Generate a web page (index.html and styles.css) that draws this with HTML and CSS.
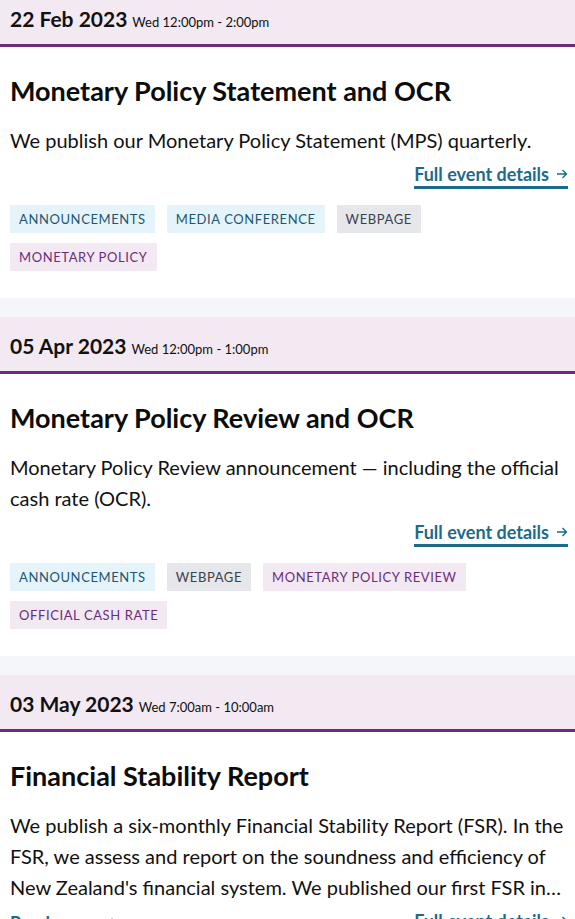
FILE: index.html
```html
<!DOCTYPE html>
<html lang="en">
<head>
<meta charset="utf-8">
<title>Events</title>
<link rel="stylesheet" href="styles.css">
</head>
<body>
<div class="events">
  <article class="event">
    <header class="event-head"><span class="date">22 Feb 2023</span><span class="time">Wed 12:00pm - 2:00pm</span></header>
    <div class="event-body">
      <h2 class="title">Monetary Policy Statement and OCR</h2>
      <p class="desc">We publish our Monetary Policy Statement (MPS) quarterly.</p>
      <div class="links">
        <a class="full" href="#">Full event details <svg class="arrow" viewBox="0 0 12 12" width="12" height="12"><path d="M1 6h9.5M6.5 2l4 4-4 4" fill="none" stroke="currentColor" stroke-width="1.4"/></svg></a>
      </div>
      <ul class="tags">
        <li class="tag blue">Announcements</li>
        <li class="tag blue">Media conference</li>
        <li class="tag grey">Webpage</li>
        <li class="tag purple">Monetary policy</li>
      </ul>
    </div>
  </article>
  <article class="event">
    <header class="event-head"><span class="date">05 Apr 2023</span><span class="time">Wed 12:00pm - 1:00pm</span></header>
    <div class="event-body">
      <h2 class="title">Monetary Policy Review and OCR</h2>
      <p class="desc">Monetary Policy Review announcement — including the official cash rate (OCR).</p>
      <div class="links">
        <a class="full" href="#">Full event details <svg class="arrow" viewBox="0 0 12 12" width="12" height="12"><path d="M1 6h9.5M6.5 2l4 4-4 4" fill="none" stroke="currentColor" stroke-width="1.4"/></svg></a>
      </div>
      <ul class="tags">
        <li class="tag blue">Announcements</li>
        <li class="tag grey">Webpage</li>
        <li class="tag purple">Monetary policy review</li>
        <li class="tag purple">Official cash rate</li>
      </ul>
    </div>
  </article>
  <article class="event">
    <header class="event-head"><span class="date">03 May 2023</span><span class="time">Wed 7:00am - 10:00am</span></header>
    <div class="event-body">
      <h2 class="title">Financial Stability Report</h2>
      <p class="desc clamp">We publish a six-monthly Financial Stability Report (FSR). In the FSR, we assess and report on the soundness and efficiency of New Zealand's financial system. We published our first FSR in 2004 and it remains a key publication.</p>
      <div class="links split">
        <a class="more" href="#">Read more <svg class="plus" viewBox="0 0 12 12" width="12" height="12"><path d="M6 1.5v9M1.5 6h9" fill="none" stroke="currentColor" stroke-width="1.4"/></svg></a>
        <a class="full" href="#">Full event details <svg class="arrow" viewBox="0 0 12 12" width="12" height="12"><path d="M1 6h9.5M6.5 2l4 4-4 4" fill="none" stroke="currentColor" stroke-width="1.4"/></svg></a>
      </div>
    </div>
  </article>
</div>
</body>
</html>
```
FILE: styles.css
```css
* { box-sizing: border-box; }
html, body { margin: 0; padding: 0; }
body {
  background: #f5f6fa;
  font-family: Lato, "Liberation Sans", sans-serif;
  color: #111;
}
.events {
  display: flex;
  flex-direction: column;
  gap: 19px;
  margin-top: -10px;
}
.event { background: #fff; }
.event-head {
  height: 57px;
  background: #f2e9f2;
  border-bottom: 3px solid #6b2d7b;
  display: flex;
  align-items: baseline;
  padding: 16px 10px 0;
  gap: 5px;
}
.date { font-size: 21px; font-weight: 700; color: #111; }
.time { font-size: 13px; color: #111; }
.event-body { padding: 29px 7px 27px 10px; }
.title {
  margin: 0;
  font-size: 27px;
  line-height: 30px;
  font-weight: 700;
  color: #0c0c0c;
}
.desc {
  margin: 19px 0 0;
  font-size: 20px;
  line-height: 31px;
  color: #111;
}
.clamp {
  display: -webkit-box;
  -webkit-line-clamp: 3;
  -webkit-box-orient: vertical;
  overflow: hidden;
}
.links {
  display: flex;
  justify-content: flex-end;
  margin-top: 7px;
}
.links.split { justify-content: space-between; }
.full, .more {
  color: #1d6a8b;
  font-size: 18px;
  font-weight: 700;
  line-height: 22px;
  text-decoration: none;
  display: inline-flex;
  align-items: center;
  gap: 7px;
}
.full { border-bottom: 3px solid #1d6a8b; padding-bottom: 1px; }
.more { gap: 10px; }
.tags {
  list-style: none;
  margin: 16px 0 0;
  padding: 0;
  display: flex;
  flex-wrap: wrap;
  gap: 10px 12px;
}
.tag {
  height: 28px;
  line-height: 28px;
  padding: 0 9px;
  font-size: 13px;
  letter-spacing: 0.6px;
  text-transform: uppercase;
}
.blue { background: #e5f3fa; color: #1c5675; }
.grey { background: #e5e7ea; color: #3b414a; }
.purple { background: #f2e9f2; color: #6b2d7b; }
```
